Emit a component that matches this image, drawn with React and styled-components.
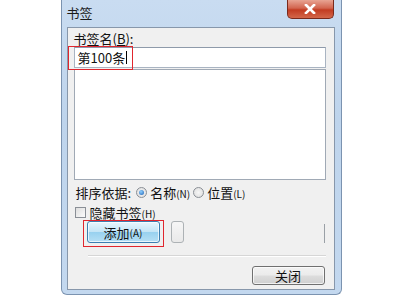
import React from "react";
import styled, { createGlobalStyle } from "styled-components";

const GlobalStyle = createGlobalStyle`
  html, body {
    margin: 0;
    padding: 0;
    background: #ffffff;
  }
  body {
    font-family: "Noto Sans CJK SC", "DejaVu Sans", sans-serif;
    font-size: 12px;
    color: #111;
  }
`;

const Page = styled.div`
  width: 400px;
  height: 300px;
  display: flex;
  justify-content: center;
  align-items: flex-start;
`;

const Window = styled.div`
  box-sizing: border-box;
  width: 281px;
  height: 295px;
  margin-left: 2px;
  border: 1px solid #7b93b0;
  border-top: none;
  border-radius: 0 0 6px 6px;
  background: linear-gradient(180deg, #c9dcf1 0%, #bed4ec 40%, #c3d8ef 100%);
  padding: 0 6px 4px 5px;
  display: flex;
  flex-direction: column;
`;

const TitleBar = styled.div`
  height: 27px;
  display: flex;
  align-items: flex-start;
  justify-content: space-between;
`;

const Title = styled.span`
  margin-top: 3px;
  font-size: 13px;
  color: #1a1a1a;
`;

const CloseX = styled.div`
  width: 47px;
  height: 19px;
  margin-right: 1px;
  border: 1px solid #7a2a1c;
  border-top: none;
  border-radius: 0 0 5px 5px;
  box-sizing: border-box;
  background: linear-gradient(180deg, #e8a493 0%, #d2654f 45%, #c23c22 55%, #d3674a 100%);
  display: flex;
  align-items: center;
  justify-content: center;
`;

const Client = styled.div`
  flex: 1;
  box-sizing: border-box;
  background: #f0f0f0;
  border: 1px solid #8797ab;
  padding: 3px 7px 0 6px;
  display: flex;
  flex-direction: column;
`;

const Label = styled.div`
  height: 16px;
  line-height: 16px;
  font-size: 13px;
`;

const Key = styled.span`
  text-decoration: underline;
`;

const InputWrap = styled.div`
  position: relative;
`;

const TextInput = styled.div`
  box-sizing: border-box;
  height: 21px;
  width: 252px;
  background: #fff;
  border: 1px solid #a9b4c2;
  border-top-color: #8e9aaa;
  padding: 0 3px;
  display: flex;
  align-items: center;
  font-size: 13px;
`;

const Caret = styled.span`
  display: inline-block;
  width: 1px;
  height: 13px;
  background: #000;
  margin-left: 1px;
`;

const Highlight = styled.div`
  position: absolute;
  z-index: 2;
  border: 1.5px solid #e0262e;
  box-sizing: border-box;
  pointer-events: none;
  left: ${(p) => p.$left}px;
  top: ${(p) => p.$top}px;
  width: ${(p) => p.$w}px;
  height: ${(p) => p.$h}px;
`;

const ListBox = styled.div`
  box-sizing: border-box;
  margin-top: 1px;
  width: 252px;
  height: 111px;
  background: #fff;
  border: 1px solid #a0a9b5;
`;

const Row = styled.div`
  display: flex;
  align-items: center;
  height: ${(p) => p.$h}px;
  margin-top: ${(p) => p.$mt || 0}px;
  padding-left: ${(p) => p.$pl || 0}px;
`;

const Text = styled.span`
  font-size: 13px;
  margin-left: ${(p) => p.$ml || 0}px;
`;

const Small = styled.span`
  font-size: 10px;
`;

const Radio = styled.span`
  box-sizing: border-box;
  width: 11px;
  height: 11px;
  border-radius: 50%;
  border: 1px solid #8a8f96;
  background: radial-gradient(circle, #f6f6f6 0%, #dcdcdc 100%);
  display: inline-flex;
  align-items: center;
  justify-content: center;
  margin-left: ${(p) => p.$ml || 0}px;

  &::after {
    content: "";
    width: 5px;
    height: 5px;
    border-radius: 50%;
    background: ${(p) => (p.$checked ? "radial-gradient(circle at 40% 35%, #8fd0ff, #1a5fb4)" : "transparent")};
  }
`;

const Checkbox = styled.span`
  box-sizing: border-box;
  width: 11px;
  height: 11px;
  border: 1px solid #8a8f96;
  background: linear-gradient(135deg, #dedede, #fbfbfb);
`;

const ButtonRow = styled.div`
  margin-top: 0;
  height: 22px;
  display: flex;
  align-items: stretch;
`;

const AddWrap = styled.div`
  position: relative;
  margin-left: 13px;
  display: flex;
`;

const Button = styled.div`
  box-sizing: border-box;
  width: ${(p) => p.$w}px;
  height: ${(p) => p.$h}px;
  border: 1px solid ${(p) => (p.$focus ? "#3c7fb1" : "#707070")};
  border-radius: 3px;
  background: ${(p) =>
    p.$focus
      ? "linear-gradient(180deg, #e8f6fd 0%, #c4e5f6 48%, #98d1ef 52%, #b6e0f5 100%)"
      : "linear-gradient(180deg, #f2f2f2 0%, #ebebeb 48%, #dddddd 52%, #cfcfcf 100%)"};
  box-shadow: inset 0 0 0 1px rgba(255, 255, 255, 0.7);
  display: flex;
  align-items: center;
  justify-content: center;
  font-size: 13px;
`;

const Stub = styled.div`
  box-sizing: border-box;
  width: 13px;
  margin-left: 11px;
  border: 1px solid #adb2b5;
  border-radius: 3px;
  background: linear-gradient(180deg, #f6f6f6, #e9e9e9);
`;

const Gap = styled.div`
  flex: 1;
`;

const Edge = styled.div`
  width: 1px;
  margin: 3px 2px 0 0;
  background: #9aa0a6;
`;

const Separator = styled.div`
  margin-top: 12px;
  margin-left: 14px;
  width: 238px;
  height: 1px;
  background: #d6d6d6;
  border-bottom: 1px solid #ffffff;
`;

const Footer = styled.div`
  margin-top: 9px;
  display: flex;
  justify-content: flex-end;
  padding-right: 2px;
`;

export default function App() {
  return (
    <>
      <GlobalStyle />
      <Page>
        <Window>
          <TitleBar>
            <Title>书签</Title>
            <CloseX>
              <svg width="12" height="10" viewBox="0 0 12 10">
                <path d="M2 1 L10 9 M10 1 L2 9" stroke="#ffffff" strokeWidth="2.6" strokeLinecap="square" />
              </svg>
            </CloseX>
          </TitleBar>
          <Client>
            <Label>
              书签名(<Key>B</Key>):
            </Label>
            <InputWrap>
              <TextInput>
                第100条<Caret />
              </TextInput>
              <Highlight $left={-6} $top={-1} $w={65} $h={24} />
            </InputWrap>
            <ListBox />
            <Row $h={20} $mt={2} $pl={2}>
              <Text>排序依据:</Text>
              <Radio $checked $ml={5} />
              <Text $ml={3}>
                名称<Small>(N)</Small>
              </Text>
              <Radio $ml={3} />
              <Text $ml={3}>
                位置<Small>(L)</Small>
              </Text>
            </Row>
            <Row $h={18} $mt={1} $pl={1}>
              <Checkbox />
              <Text $ml={4}>
                隐藏书签<Small>(H)</Small>
              </Text>
            </Row>
            <ButtonRow>
              <AddWrap>
                <Button $focus $w={73} $h={22}>
                  添加<Small>(A)</Small>
                </Button>
                <Highlight $left={-4} $top={-1} $w={81} $h={27} />
              </AddWrap>
              <Stub />
              <Gap />
              <Edge />
            </ButtonRow>
            <Separator />
            <Footer>
              <Button $w={73} $h={19}>
                关闭
              </Button>
            </Footer>
          </Client>
        </Window>
      </Page>
    </>
  );
}
